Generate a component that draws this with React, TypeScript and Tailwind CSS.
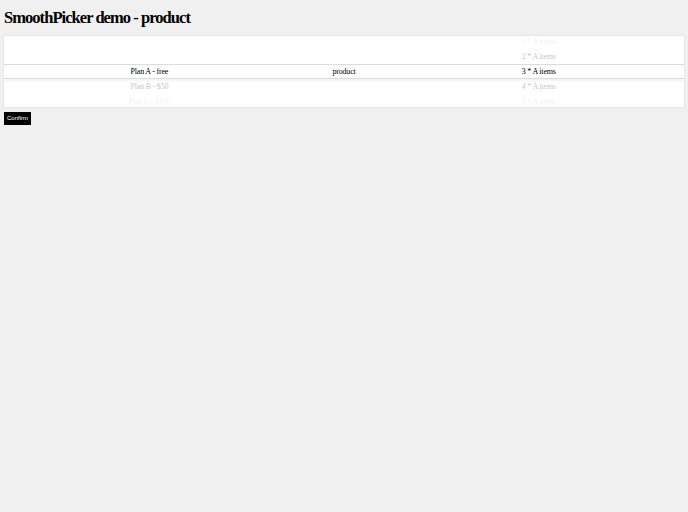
import React from "react";

const serif = { fontFamily: '"Liberation Serif", "Times New Roman", serif' };

type Col = { items: string[]; selected: number };

const cols: Col[] = [
  { items: ["Plan A - free", "Plan B - $50", "Plan C - $100"], selected: 0 },
  { items: ["product"], selected: 0 },
  { items: ["1 * A items", "2 * A items", "3 * A items", "4 * A items", "5 * A items"], selected: 2 },
];

function colorFor(d: number) {
  if (d === 0) return "text-black";
  if (d === 1) return "text-[#c8c8c8]";
  return "text-[#f3f3f3]";
}

export default function App() {
  return (
    <div className="min-h-screen bg-[#f0f0f0] px-1 pt-[9px]" style={serif}>
      <h1 className="text-[16.5px] font-bold leading-[18px] text-black tracking-[-0.95px]">
        SmoothPicker demo - product
      </h1>
      <div className="relative mt-[9px] h-[71px] overflow-hidden bg-white shadow-[0_0_2px_rgba(0,0,0,0.1)]">
        <div className="absolute inset-x-0 top-[28px] h-[15px] border-y border-[#dcdcdc] bg-white shadow-[0_2px_2px_rgba(0,0,0,0.05)]" />
        <div className="relative grid grid-cols-3 px-[48px]">
          {cols.map((c, ci) => (
            <div key={ci} className="flex flex-col" style={{ marginTop: 28 - c.selected * 15 }}>
              {c.items.map((it, i) => (
                <div
                  key={i}
                  className={`flex h-[15px] items-center justify-center text-[8px] leading-none tracking-[-0.2px] ${colorFor(Math.abs(i - c.selected))}`}
                >
                  {it}
                </div>
              ))}
            </div>
          ))}
        </div>
      </div>
      <button
        className="mt-[5px] flex h-[13px] items-center bg-black px-[3px] text-[6px] text-white"
        style={{ fontFamily: '"Liberation Sans", Arial, sans-serif' }}
      >
        Confirm
      </button>
    </div>
  );
}
